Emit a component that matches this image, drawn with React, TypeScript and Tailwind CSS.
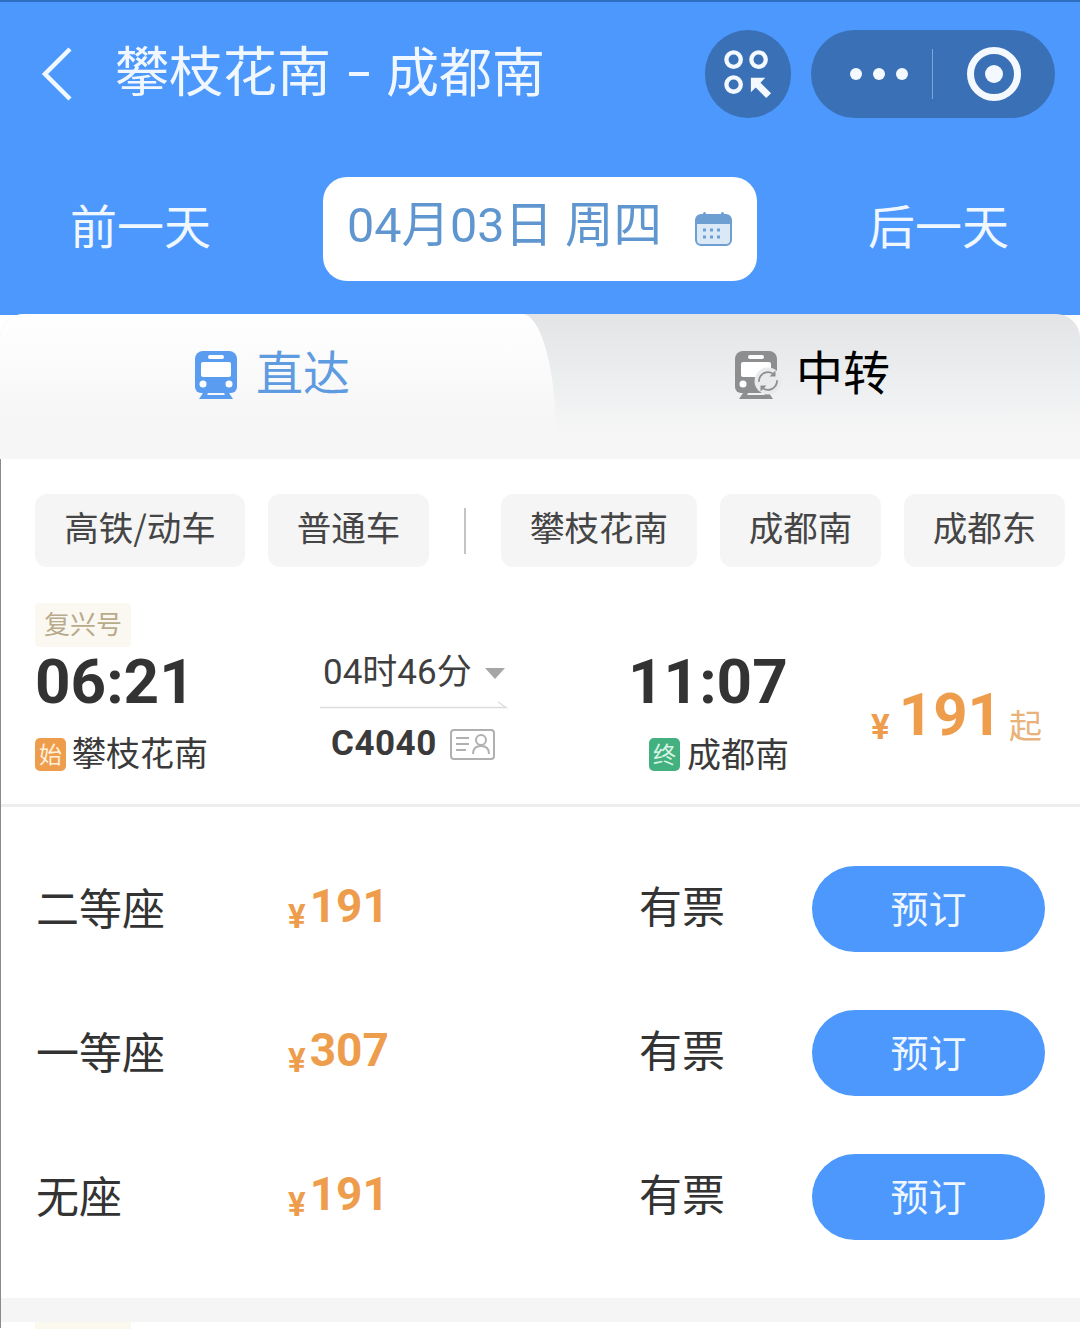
import React from "react";

const seats = [
  { name: "二等座", price: "191" },
  { name: "一等座", price: "307" },
  { name: "无座", price: "191" },
];

const chipsLeft = [
  { label: "高铁/动车", width: "w-[210px]" },
  { label: "普通车", width: "w-[161px]" },
];

const chipsRight = [
  { label: "攀枝花南", width: "w-[196px]" },
  { label: "成都南", width: "w-[161px]" },
  { label: "成都东", width: "w-[161px]" },
];

function Chip({ label, width }: { label: string; width: string }) {
  return (
    <div
      className={`${width} h-[73px] shrink-0 rounded-[12px] bg-[#f5f5f5] flex items-center justify-center pb-[7px] text-[34.5px] text-[#454545]`}
    >
      {label}
    </div>
  );
}

function TrainIcon({ color }: { color: string }) {
  return (
    <svg width="44" height="50" viewBox="0 0 44 50" fill="none">
      <path
        d="M9 1h26a8 8 0 0 1 8 8v28a6 6 0 0 1-6 6H7a6 6 0 0 1-6-6V9a8 8 0 0 1 8-8z"
        fill={color}
      />
      <rect x="14" y="5" width="16" height="4" rx="2" fill="#fff" />
      <rect x="7" y="12" width="30" height="15" rx="2" fill="#fff" />
      <circle cx="9" cy="34" r="3.5" fill="#fff" />
      <circle cx="35" cy="34" r="3.5" fill="#fff" />
      <path d="M9 43l-4 6h34l-4-6h-5l1 2H13l1-2z" fill={color} />
    </svg>
  );
}

function TransferIcon() {
  return (
    <div className="relative w-[44px] h-[50px]">
      <TrainIcon color="#8d8e90" />
      <svg
        className="absolute left-[20px] top-[17px]"
        width="28"
        height="28"
        viewBox="0 0 28 28"
        fill="none"
      >
        <circle cx="14" cy="14" r="13.5" fill="#e9eaeb" />
        <path
          d="M5 14a9 9 0 0 1 15-6.5M23 14a9 9 0 0 1-15 6.5"
          stroke="#8d8e90"
          strokeWidth="1.8"
          strokeLinecap="round"
        />
        <path d="M21.5 3.5v6h-6z" fill="#8d8e90" />
        <path d="M6.5 24.5v-6h6z" fill="#8d8e90" />
      </svg>
    </div>
  );
}

export default function App() {
  return (
    <div className="w-[1080px] h-[1329px] overflow-hidden bg-white [font-family:'Noto_Sans_CJK_SC',sans-serif]">
      {/* Header */}
      <div className="h-[315px] bg-[#4c98fd] border-t-2 border-[#2f6fc0] pt-[28px]">
        <div className="h-[88px] flex items-center pl-[40px] pr-[25px]">
          <svg width="34" height="54" viewBox="0 0 34 54" fill="none">
            <path d="M30 2L5 27l25 25" stroke="#f2f8ff" strokeWidth="4.5" />
          </svg>
          <div className="ml-[41px] pb-[10px] flex items-center text-[54px] leading-none text-[#f0f7ff]">
            <span>攀枝花南</span>
            <span className="ml-[18px] mt-[10px] w-[20px] h-[4px] bg-[#f0f7ff]" />
            <span className="ml-[17px] text-[53px]">成都南</span>
          </div>
          <div className="ml-auto flex items-center gap-[20px]">
            <div className="w-[86px] h-[88px] rounded-full bg-[#3a70b6] flex items-center justify-center">
              <svg width="48" height="48" viewBox="0 0 50 50" fill="none">
                <circle cx="10" cy="10" r="7.5" stroke="#f4f9ff" strokeWidth="4.5" />
                <circle cx="36" cy="10" r="7.5" stroke="#f4f9ff" strokeWidth="4.5" />
                <circle cx="10" cy="36" r="7.5" stroke="#f4f9ff" strokeWidth="4.5" />
                <path d="M28 29h15l-5 5 11 11-5 5-11-11-5 5z" fill="#f4f9ff" />
              </svg>
            </div>
            <div className="w-[244px] h-[88px] rounded-full bg-[#3a70b6] flex items-center">
              <div className="w-[121px] pl-[39px] flex gap-[11px]">
                <div className="w-[12px] h-[12px] rounded-full bg-[#f4f9ff]" />
                <div className="w-[12px] h-[12px] rounded-full bg-[#f4f9ff]" />
                <div className="w-[12px] h-[12px] rounded-full bg-[#f4f9ff]" />
              </div>
              <div className="w-px h-[50px] bg-[#7ea6d8]" />
              <div className="ml-[34px] w-[54px] h-[54px] rounded-full border-[7px] border-[#f4f9ff] flex items-center justify-center">
                <div className="w-[18px] h-[18px] rounded-full bg-[#f4f9ff]" />
              </div>
            </div>
          </div>
        </div>

        {/* Date switcher */}
        <div className="mt-[59px] flex items-center">
          <div className="w-[323px] pl-[70px] pb-[12px] text-[47px] leading-none text-[#f0f7ff]">前一天</div>
          <div className="w-[434px] h-[104px] rounded-[24px] bg-white flex items-center pl-[24px] pr-[25px]">
            <span className="pb-[5px] text-[48.5px] leading-none text-[#5f96cf] whitespace-pre [font-family:Roboto,'Noto_Sans_CJK_SC',sans-serif]">
              04月03日 周四
            </span>
            <svg className="ml-auto" width="37" height="34" viewBox="0 0 37 34" fill="none">
              <rect x="1" y="3" width="35" height="30" rx="5" fill="#dbe8f5" stroke="#6d9fd2" strokeWidth="2" />
              <path d="M1 8a5 5 0 0 1 5-5h25a5 5 0 0 1 5 5v4H1z" fill="#6d9fd2" />
              <rect x="8" y="0" width="3" height="6" rx="1.5" fill="#6d9fd2" />
              <rect x="26" y="0" width="3" height="6" rx="1.5" fill="#6d9fd2" />
              <path
                d="M8 18h3M15 18h3M22 18h3M8 25h3M15 25h3M22 25h3"
                stroke="#6d9fd2"
                strokeWidth="3"
              />
            </svg>
          </div>
          <div className="ml-[111px] pb-[12px] text-[47px] leading-none text-[#f0f7ff]">后一天</div>
        </div>
      </div>

      {/* Tabs */}
      <div className="-mt-px h-[145px] rounded-t-[24px] bg-[linear-gradient(to_bottom,#e3e4e6_0%,#f0f1f2_60%,#f6f6f6_85%)] flex">
        <div className="w-[556px] h-[122px] rounded-tl-[24px] rounded-tr-[34px_122px] bg-[linear-gradient(to_bottom,#ffffff_0%,#f6f6f6_85%)] flex items-start justify-center pt-[36px] pr-[12px] gap-[18px]">
          <TrainIcon color="#5a9cf0" />
          <span className="-mt-[7px] text-[47px] leading-[54px] text-[#5f9be0]">直达</span>
        </div>
        <div className="flex-1 flex items-start pt-[36px] pl-[178px] gap-[18px]">
          <TransferIcon />
          <span className="-mt-[7px] text-[47px] leading-[54px] text-black">中转</span>
        </div>
      </div>

      <div className="border-l border-[#8a8a8a] h-[869px]">
        {/* Filters */}
        <div className="pt-[35px] pl-[34px] flex items-center">
          <div className="flex gap-[23px]">
            {chipsLeft.map((chip) => (
              <Chip key={chip.label} {...chip} />
            ))}
          </div>
          <div className="mx-[35px] w-[2px] h-[46px] bg-[#c4c4c4] shrink-0" />
          <div className="flex gap-[23px]">
            {chipsRight.map((chip) => (
              <Chip key={chip.label} {...chip} />
            ))}
          </div>
        </div>

        {/* Train summary */}
        <div className="mt-[36px] h-[204px] pl-[34px] flex border-b-[3px] border-[#eeeeee]">
          <div className="w-[285px]">
            <div className="w-[96px] h-[44px] bg-[#fbf8f2] rounded-[4px] flex items-center justify-center pb-[6px] text-[26px] text-[#b8aa8b]">
              复兴号
            </div>
            <div className="text-[62px] leading-[70px] font-bold text-[#333333] [font-family:Roboto,sans-serif]">
              06:21
            </div>
            <div className="mt-[21px] flex items-start gap-[6px]">
              <div className="w-[31px] h-[33px] rounded-[5px] bg-[#ee9d4c] flex items-center justify-center pb-[2px] text-[23px] text-[#fff0dc]">
                始
              </div>
              <span className="-mt-[6px] text-[34px] leading-[40px] text-[#3a3a3a]">攀枝花南</span>
            </div>
          </div>

          <div className="w-[188px] pt-[50px]">
            <div className="flex items-center pl-[3px] gap-[13px]">
              <span className="text-[35px] leading-[40px] text-[#3f3f3f] [font-family:Roboto,'Noto_Sans_CJK_SC',sans-serif]">
                04时46分
              </span>
              <div className="w-0 h-0 border-x-[10px] border-t-[11px] border-x-transparent border-t-[#a6a6a6]" />
            </div>
            <svg className="mt-[8px]" width="188" height="8" viewBox="0 0 188 8" fill="none">
              <path d="M0 6.5h186L178 1" stroke="#dcdcdc" strokeWidth="1.5" />
            </svg>
            <div className="mt-[15px] pl-[11px] flex items-center gap-[13px]">
              <span className="text-[35px] leading-[40px] font-bold text-[#3a3a3a] tracking-[0.5px] [font-family:Roboto,sans-serif]">
                C4040
              </span>
              <svg width="45" height="31" viewBox="0 0 45 31" fill="none">
                <rect x="1" y="1" width="43" height="29" rx="3" stroke="#b0b0b0" strokeWidth="2" />
                <path d="M6 9h13M6 15h13M6 21h10" stroke="#b0b0b0" strokeWidth="2" />
                <circle cx="31" cy="11" r="5" stroke="#b0b0b0" strokeWidth="2" />
                <path d="M23 25c0-5 3-8 8-8s8 3 8 8" stroke="#b0b0b0" strokeWidth="2" />
              </svg>
            </div>
          </div>

          <div className="ml-[120px] w-[243px] pt-[44px]">
            <div className="text-[62px] leading-[70px] font-bold text-[#333333] [font-family:Roboto,sans-serif]">
              11:07
            </div>
            <div className="mt-[21px] pl-[21px] flex items-start gap-[7px]">
              <div className="w-[31px] h-[33px] rounded-[5px] bg-[#43b07f] flex items-center justify-center pb-[2px] text-[23px] text-[#d8f5e6]">
                终
              </div>
              <span className="-mt-[5px] text-[34px] leading-[40px] text-[#3a3a3a]">成都南</span>
            </div>
          </div>

          <div className="pt-[76px] flex items-end h-[142px] text-[#ee9d4c] [font-family:Roboto,'Noto_Sans_CJK_SC',sans-serif]">
            <span className="text-[35px] leading-[36px] font-bold mb-[-1px]">¥</span>
            <span className="ml-[9px] text-[60px] leading-[60px] font-bold">191</span>
            <span className="ml-[7px] mb-[-2px] text-[33px] leading-[40px] text-[#e8b27a]">起</span>
          </div>
        </div>

        {/* Seats */}
        <div className="pt-[27px]">
          {seats.map((seat) => (
            <div key={seat.name} className="h-[144px] pl-[35px] flex items-center">
              <div className="w-[252px] text-[43px] leading-none text-[#333333]">{seat.name}</div>
              <div className="w-[351px] flex items-end text-[#ee9d4c] font-bold [font-family:Roboto,'Noto_Sans_CJK_SC',sans-serif]">
                <span className="text-[33px] leading-[36px] mb-[-6px]">¥</span>
                <span className="ml-[4px] text-[46px] leading-[46px]">{seat.price}</span>
              </div>
              <div className="w-[173px] pb-[4px] text-[43px] leading-none text-[#333333]">有票</div>
              <div className="mt-[5px] w-[233px] h-[86px] rounded-full bg-[#4c98fd] flex items-center justify-center pb-[5px] text-[38px] text-[#eef6ff]">
                预订
              </div>
            </div>
          ))}
        </div>

        <div className="mt-[32px] h-[24px] bg-[#f5f5f5]" />
        <div className="ml-[34px] w-[96px] h-[10px] bg-[#fbf9ee]" />
      </div>
    </div>
  );
}
